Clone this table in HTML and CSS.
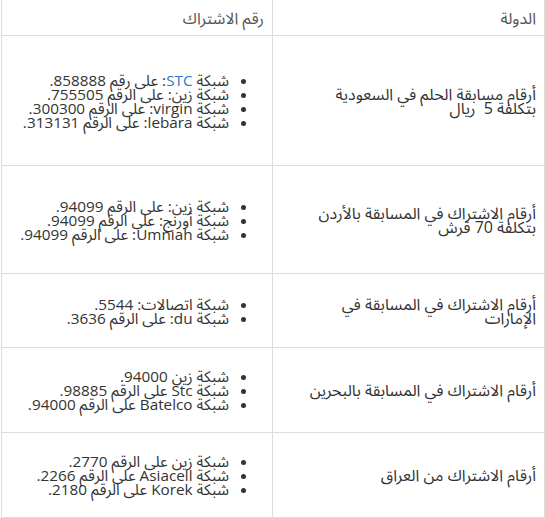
FILE: index.html
```html
<!DOCTYPE html>
<html lang="ar" dir="rtl">
<head>
<meta charset="utf-8">
<link rel="stylesheet" href="styles.css">
</head>
<body>
<table class="subs">
  <thead>
    <tr class="h-head">
      <th class="col-country">الدولة</th>
      <th class="col-num">رقم الاشتراك</th>
    </tr>
  </thead>
  <tbody>
    <tr class="h-r1">
      <td class="country">أرقام مسابقة الحلم في السعودية بتكلفة 5&nbsp; ريال</td>
      <td>
        <ul>
          <li>شبكة <span class="link">STC</span>: على رقم 858888.</li>
          <li>شبكة زين: على الرقم 755505.</li>
          <li>شبكة virgin: على الرقم 300300.</li>
          <li>شبكة lebara: على الرقم 313131.</li>
        </ul>
      </td>
    </tr>
    <tr class="h-r2">
      <td class="country">أرقام الاشتراك في المسابقة بالأردن بتكلفة 70 قرش</td>
      <td>
        <ul>
          <li>شبكة زين: على الرقم 94099.</li>
          <li>شبكة أورنج: على الرقم 94099.</li>
          <li>شبكة Umniah: على الرقم 94099.</li>
        </ul>
      </td>
    </tr>
    <tr class="h-r3">
      <td class="country">أرقام الاشتراك في المسابقة في الإمارات</td>
      <td>
        <ul>
          <li>شبكة اتصالات: 5544.</li>
          <li>شبكة du: على الرقم 3636.</li>
        </ul>
      </td>
    </tr>
    <tr class="h-r4">
      <td class="country">أرقام الاشتراك في المسابقة بالبحرين</td>
      <td>
        <ul>
          <li>شبكة زين 94000.</li>
          <li>شبكة Stc على الرقم 98885.</li>
          <li>شبكة Batelco على الرقم 94000.</li>
        </ul>
      </td>
    </tr>
    <tr class="h-r5">
      <td class="country">أرقام الاشتراك من العراق</td>
      <td>
        <ul>
          <li>شبكة زين على الرقم 2770.</li>
          <li>شبكة Asiacell على الرقم 2266.</li>
          <li>شبكة Korek على الرقم 2180.</li>
        </ul>
      </td>
    </tr>
  </tbody>
</table>
</body>
</html>
```
FILE: styles.css
```css
html, body {
  margin: 0;
  padding: 0;
  background: #fff;
}
body {
  font-family: "Open Sans", "Noto Sans Arabic", "Noto Sans", "DejaVu Sans", sans-serif;
  font-size: 16px;
  color: #333;
}
.subs {
  width: 544px;
  border-collapse: collapse;
  margin-top: -1px;
}
.subs th,
.subs td {
  border: 1px solid #ddd;
  padding: 0 8px;
  text-align: right;
  vertical-align: middle;
  line-height: 14px;
}
.subs th {
  font-weight: normal;
  color: #555;
}
.col-country {
  width: 255px;
}
.subs td.country {
  padding-left: 24px;
}
.subs ul {
  margin: 0;
  padding: 0 35px 0 0;
}
.subs li {
  font-size: 15.3px;
}
.link {
  color: #2f78c4;
}
.h-head { height: 36px; }
.h-r1 { height: 130px; }
.h-r2 { height: 108px; }
.h-r3 { height: 74px; }
.h-r4 { height: 85px; }
.h-r5 { height: 85px; }
```
